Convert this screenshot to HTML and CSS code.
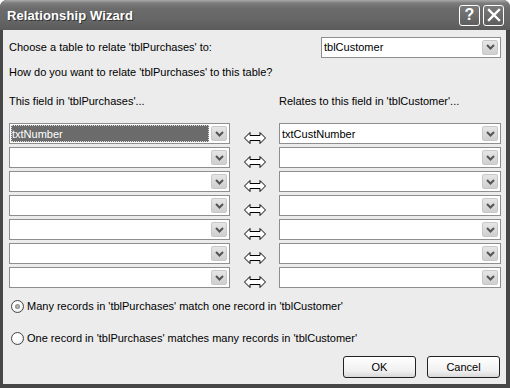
FILE: index.html
```html
<!DOCTYPE html>
<html>
<head>
<meta charset="utf-8">
<link rel="stylesheet" href="styles.css">
</head>
<body>
<div class="window">
  <div class="titlebar">
    <span class="title">Relationship Wizard</span>
    <span class="tb-btn">?</span>
    <span class="tb-btn close">
      <svg width="14" height="14" viewBox="0 0 14 14"><path d="M2 2 L12 12 M12 2 L2 12" stroke="#fff" stroke-width="2.4" stroke-linecap="square"/></svg>
    </span>
  </div>
  <div class="client">
    <div class="row-top">
      <span class="label">Choose a table to relate 'tblPurchases' to:</span>
      <div class="combo top-combo"><span class="val">tblCustomer</span><span class="ddbtn"><svg width="9" height="6" viewBox="0 0 9 6"><path d="M1 1 L4.5 4.5 L8 1" fill="none" stroke="#555" stroke-width="2"/></svg></span></div>
    </div>
    <div class="label how">How do you want to relate 'tblPurchases' to this table?</div>
    <div class="headers">
      <span class="label">This field in 'tblPurchases'...</span>
      <span class="label">Relates to this field in 'tblCustomer'...</span>
    </div>
    <div class="grid">
      <div class="combo"><span class="val selected">txtNumber</span><span class="ddbtn"><svg width="9" height="6" viewBox="0 0 9 6"><path d="M1 1 L4.5 4.5 L8 1" fill="none" stroke="#555" stroke-width="2"/></svg></span></div>
      <svg class="arrow" width="22" height="12" viewBox="0 0 22 12"><path d="M0.5 6 L6 0.5 L6 3.5 L16 3.5 L16 0.5 L21.5 6 L16 11.5 L16 8.5 L6 8.5 L6 11.5 Z" fill="#fff" stroke="#000" stroke-width="1"/></svg>
      <div class="combo"><span class="val">txtCustNumber</span><span class="ddbtn"><svg width="9" height="6" viewBox="0 0 9 6"><path d="M1 1 L4.5 4.5 L8 1" fill="none" stroke="#555" stroke-width="2"/></svg></span></div>

      <div class="combo"><span class="val"></span><span class="ddbtn"><svg width="9" height="6" viewBox="0 0 9 6"><path d="M1 1 L4.5 4.5 L8 1" fill="none" stroke="#555" stroke-width="2"/></svg></span></div>
      <svg class="arrow" width="22" height="12" viewBox="0 0 22 12"><path d="M0.5 6 L6 0.5 L6 3.5 L16 3.5 L16 0.5 L21.5 6 L16 11.5 L16 8.5 L6 8.5 L6 11.5 Z" fill="#fff" stroke="#000" stroke-width="1"/></svg>
      <div class="combo"><span class="val"></span><span class="ddbtn"><svg width="9" height="6" viewBox="0 0 9 6"><path d="M1 1 L4.5 4.5 L8 1" fill="none" stroke="#555" stroke-width="2"/></svg></span></div>

      <div class="combo"><span class="val"></span><span class="ddbtn"><svg width="9" height="6" viewBox="0 0 9 6"><path d="M1 1 L4.5 4.5 L8 1" fill="none" stroke="#555" stroke-width="2"/></svg></span></div>
      <svg class="arrow" width="22" height="12" viewBox="0 0 22 12"><path d="M0.5 6 L6 0.5 L6 3.5 L16 3.5 L16 0.5 L21.5 6 L16 11.5 L16 8.5 L6 8.5 L6 11.5 Z" fill="#fff" stroke="#000" stroke-width="1"/></svg>
      <div class="combo"><span class="val"></span><span class="ddbtn"><svg width="9" height="6" viewBox="0 0 9 6"><path d="M1 1 L4.5 4.5 L8 1" fill="none" stroke="#555" stroke-width="2"/></svg></span></div>

      <div class="combo"><span class="val"></span><span class="ddbtn"><svg width="9" height="6" viewBox="0 0 9 6"><path d="M1 1 L4.5 4.5 L8 1" fill="none" stroke="#555" stroke-width="2"/></svg></span></div>
      <svg class="arrow" width="22" height="12" viewBox="0 0 22 12"><path d="M0.5 6 L6 0.5 L6 3.5 L16 3.5 L16 0.5 L21.5 6 L16 11.5 L16 8.5 L6 8.5 L6 11.5 Z" fill="#fff" stroke="#000" stroke-width="1"/></svg>
      <div class="combo"><span class="val"></span><span class="ddbtn"><svg width="9" height="6" viewBox="0 0 9 6"><path d="M1 1 L4.5 4.5 L8 1" fill="none" stroke="#555" stroke-width="2"/></svg></span></div>

      <div class="combo"><span class="val"></span><span class="ddbtn"><svg width="9" height="6" viewBox="0 0 9 6"><path d="M1 1 L4.5 4.5 L8 1" fill="none" stroke="#555" stroke-width="2"/></svg></span></div>
      <svg class="arrow" width="22" height="12" viewBox="0 0 22 12"><path d="M0.5 6 L6 0.5 L6 3.5 L16 3.5 L16 0.5 L21.5 6 L16 11.5 L16 8.5 L6 8.5 L6 11.5 Z" fill="#fff" stroke="#000" stroke-width="1"/></svg>
      <div class="combo"><span class="val"></span><span class="ddbtn"><svg width="9" height="6" viewBox="0 0 9 6"><path d="M1 1 L4.5 4.5 L8 1" fill="none" stroke="#555" stroke-width="2"/></svg></span></div>

      <div class="combo"><span class="val"></span><span class="ddbtn"><svg width="9" height="6" viewBox="0 0 9 6"><path d="M1 1 L4.5 4.5 L8 1" fill="none" stroke="#555" stroke-width="2"/></svg></span></div>
      <svg class="arrow" width="22" height="12" viewBox="0 0 22 12"><path d="M0.5 6 L6 0.5 L6 3.5 L16 3.5 L16 0.5 L21.5 6 L16 11.5 L16 8.5 L6 8.5 L6 11.5 Z" fill="#fff" stroke="#000" stroke-width="1"/></svg>
      <div class="combo"><span class="val"></span><span class="ddbtn"><svg width="9" height="6" viewBox="0 0 9 6"><path d="M1 1 L4.5 4.5 L8 1" fill="none" stroke="#555" stroke-width="2"/></svg></span></div>

      <div class="combo"><span class="val"></span><span class="ddbtn"><svg width="9" height="6" viewBox="0 0 9 6"><path d="M1 1 L4.5 4.5 L8 1" fill="none" stroke="#555" stroke-width="2"/></svg></span></div>
      <svg class="arrow" width="22" height="12" viewBox="0 0 22 12"><path d="M0.5 6 L6 0.5 L6 3.5 L16 3.5 L16 0.5 L21.5 6 L16 11.5 L16 8.5 L6 8.5 L6 11.5 Z" fill="#fff" stroke="#000" stroke-width="1"/></svg>
      <div class="combo"><span class="val"></span><span class="ddbtn"><svg width="9" height="6" viewBox="0 0 9 6"><path d="M1 1 L4.5 4.5 L8 1" fill="none" stroke="#555" stroke-width="2"/></svg></span></div>
    </div>
    <div class="radio r1"><span class="dot checked"></span><span class="label">Many records in 'tblPurchases' match one record in 'tblCustomer'</span></div>
    <div class="radio r2"><span class="dot"></span><span class="label">One record in 'tblPurchases' matches many records in 'tblCustomer'</span></div>
    <div class="buttons">
      <span class="btn">OK</span>
      <span class="btn">Cancel</span>
    </div>
  </div>
</div>
</body>
</html>
```
FILE: styles.css
```css
html, body { margin: 0; padding: 0; background: #fff; }
.window {
  width: 510px; height: 388px;
  display: flex; flex-direction: column;
  background: #474747;
  border-radius: 7px 7px 0 0;
  overflow: hidden;
  font-family: "Liberation Sans", Arial, sans-serif;
  font-size: 11px;
  color: #000;
}
.titlebar {
  height: 30px; flex: none;
  display: flex; align-items: center;
  padding: 0 6px 0 7px;
  background: linear-gradient(#a9a9a9 0px, #7d7d7d 3px, #6c6c6c 8px, #666 20px, #5b5b5b 30px);
  gap: 3px;
}
.title {
  flex: 1;
  color: #fff;
  font-weight: bold;
  font-size: 13px;
  text-shadow: 1px 1px 0 #333;
  letter-spacing: 0.1px;
}
.tb-btn {
  width: 19px; height: 19px;
  border: 1px solid #fff;
  border-radius: 3px;
  background: linear-gradient(#7a7a7a, #5e5e5e);
  color: #fff;
  font-weight: bold;
  font-size: 16px;
  display: flex; align-items: center; justify-content: center;
  line-height: 1;
}
.client {
  flex: 1;
  margin: 0 4px 4px 3px;
  background: #ececec;
  padding: 7px 5px 0 6px;
  display: flex; flex-direction: column;
}
.row-top { display: flex; justify-content: space-between; align-items: center; height: 20px; }
.label { line-height: 14px; white-space: nowrap; }
.top-combo { width: 180px; height: 20px; }
.how { margin-top: 8px; }
.headers { margin-top: 15px; display: flex; }
.headers .label:first-child { width: 270px; }
.grid {
  margin-top: 15px;
  display: grid;
  grid-template-columns: 221px 49px 1fr;
  grid-auto-rows: 21px;
  row-gap: 3px;
}
.combo {
  box-sizing: border-box;
  border: 1px solid #8e8e8e;
  background: #fff;
  display: flex; align-items: center;
  padding: 1px 2px 1px 1px;
  height: 21px;
}
.val {
  flex: 1; height: 100%;
  display: flex; align-items: center;
  padding-left: 1px;
  box-sizing: border-box;
}
.val.selected {
  background: #6b6b6b;
  color: #fff;
  outline: 1px dotted #ddd;
  outline-offset: -1px;
  margin-right: 2px;
}
.ddbtn {
  width: 16px; height: 15px;
  box-sizing: border-box;
  border: 1px solid #c8c8c8;
  border-radius: 2px;
  background: linear-gradient(#e6e6e6, #cfcfcf);
  display: flex; align-items: center; justify-content: center;
}
.arrow { align-self: end; justify-self: center; }
.radio { display: flex; align-items: center; gap: 3px; }
.r1 { margin-top: 11px; margin-left: 2px; }
.r2 { margin-top: 18px; margin-left: 2px; }
.dot {
  width: 13px; height: 13px; box-sizing: border-box;
  border: 1px solid #444;
  border-radius: 50%;
  background: radial-gradient(circle at 40% 40%, #fff 40%, #dadada 100%);
  display: flex; align-items: center; justify-content: center;
}
.dot.checked::after {
  content: ""; width: 5px; height: 5px; border-radius: 50%;
  background: radial-gradient(#bbb, #777);
}
.buttons { margin-top: 11px; display: flex; justify-content: flex-end; gap: 11px; padding-right: 1px; }
.btn {
  width: 73px; height: 22px; box-sizing: border-box;
  border: 1px solid #222;
  border-radius: 3px;
  background: linear-gradient(#fff, #f0f0f0 70%, #d8d8d8);
  display: flex; align-items: center; justify-content: center;
}
```
